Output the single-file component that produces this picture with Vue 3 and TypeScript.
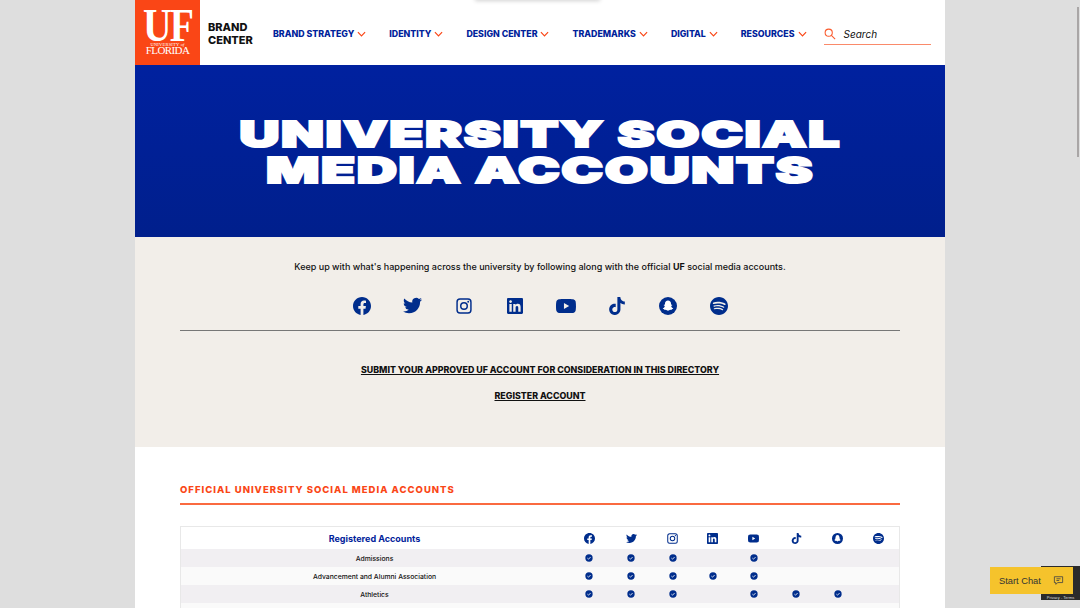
<template>
  <div class="page">
    <div class="top-shadow"></div>
    <header class="header">
      <a class="logo">
        <span class="logo-uf">UF</span>
        <span class="logo-uni">UNIVERSITY <i>of</i></span>
        <span class="logo-fl">FLORIDA</span>
      </a>
      <div class="brand">BRAND<br />CENTER</div>
      <nav class="nav">
        <a v-for="item in navItems" :key="item" class="nav-item">
          {{ item }}
          <svg class="chev" viewBox="0 0 10 6"><path d="M1 1l4 4 4-4" /></svg>
        </a>
      </nav>
      <div class="search">
        <svg class="search-icon" viewBox="0 0 14 14"><circle cx="5.5" cy="5.5" r="4.2" /><path d="M8.6 8.6l4.4 4.4" /></svg>
        <span>Search</span>
      </div>
    </header>

    <section class="hero">
      <h1><span>UNIVERSITY SOCIAL</span><span>MEDIA ACCOUNTS</span></h1>
    </section>

    <section class="intro">
      <p class="lead">Keep up with what's happening across the university by following along with the official <b>UF</b> social media accounts.</p>
      <div class="socials">
        <div v-for="icon in icons" :key="icon.name" class="slot">
          <svg viewBox="0 0 24 24" :style="{ width: icon.size + 'px', height: icon.size + 'px' }">
            <path v-for="(p, i) in icon.paths" :key="i" :d="p.d" :fill="p.fill || '#002D8C'" fill-rule="evenodd" />
          </svg>
        </div>
      </div>
      <hr class="rule" />
      <a class="link">SUBMIT YOUR APPROVED UF ACCOUNT FOR CONSIDERATION IN THIS DIRECTORY</a>
      <a class="link second">REGISTER ACCOUNT</a>
    </section>

    <section class="directory">
      <h2>OFFICIAL UNIVERSITY SOCIAL MEDIA ACCOUNTS</h2>
      <div class="table">
        <div class="row head">
          <div class="name">Registered Accounts</div>
          <div v-for="icon in icons" :key="icon.name" class="cell">
            <svg class="mini" viewBox="0 0 24 24">
              <path v-for="(p, i) in icon.paths" :key="i" :d="p.d" :fill="p.fill || '#002D8C'" fill-rule="evenodd" />
            </svg>
          </div>
        </div>
        <div v-for="(row, r) in rows" :key="r" class="row body">
          <div class="name">{{ row.name }}</div>
          <div v-for="(on, i) in row.checks" :key="i" class="cell">
            <svg v-if="on" class="check" viewBox="0 0 12 12">
              <circle cx="6" cy="6" r="5.5" fill="#002D8C" />
              <path d="M3.6 6.2l1.7 1.6 3.1-3.3" fill="none" stroke="#fff" stroke-width="1.2" />
            </svg>
          </div>
        </div>
      </div>
    </section>

    <div class="recaptcha"><span>Privacy - Terms</span></div>
    <div class="chat">
      <span>Start Chat</span>
      <svg viewBox="0 0 16 16"><path d="M2 2.5h12v8.5H7l-3 2.5V11H2z" /><path d="M5 5.5h6M5 8h4" /></svg>
    </div>
    <div class="thumb"></div>
  </div>
</template>

<script setup lang="ts">
const navItems = ['BRAND STRATEGY', 'IDENTITY', 'DESIGN CENTER', 'TRADEMARKS', 'DIGITAL', 'RESOURCES']

interface IconPath { d: string; fill?: string }
const circle = 'M12 0a12 12 0 1 0 0 24a12 12 0 1 0 0-24z'

const icons: { name: string; size: number; paths: IconPath[] }[] = [
  { name: 'facebook', size: 18, paths: [{ d: 'M24 12.073c0-6.627-5.373-12-12-12s-12 5.373-12 12c0 5.99 4.388 10.954 10.125 11.854v-8.385H7.078v-3.47h3.047V9.43c0-3.007 1.792-4.669 4.533-4.669 1.312 0 2.686.235 2.686.235v2.953H15.83c-1.491 0-1.956.925-1.956 1.874v2.25h3.328l-.532 3.47h-2.796v8.385C19.612 23.027 24 18.062 24 12.073z' }] },
  { name: 'twitter', size: 19, paths: [{ d: 'M23.953 4.57a10 10 0 01-2.825.775 4.958 4.958 0 002.163-2.723c-.951.555-2.005.959-3.127 1.184a4.92 4.92 0 00-8.384 4.482C7.69 8.095 4.067 6.13 1.64 3.162a4.822 4.822 0 00-.666 2.475c0 1.71.87 3.213 2.188 4.096a4.904 4.904 0 01-2.228-.616v.06a4.923 4.923 0 003.946 4.827 4.996 4.996 0 01-2.212.085 4.936 4.936 0 004.604 3.417 9.867 9.867 0 01-6.102 2.105c-.39 0-.779-.023-1.17-.067a13.995 13.995 0 007.557 2.209c9.053 0 13.998-7.496 13.998-13.985 0-.21 0-.42-.015-.63A9.935 9.935 0 0024 4.59z' }] },
  { name: 'instagram', size: 16, paths: [{ d: 'M6 .5h12A5.5 5.5 0 0 1 23.500 6v12a5.500 5.500 0 0 1-5.500 5.500H6A5.500 5.500 0 0 1 .5 18V6A5.500 5.500 0 0 1 6 .5zM6 2.700A3.300 3.300 0 0 0 2.700 6v12A3.300 3.300 0 0 0 6 21.300h12a3.300 3.300 0 0 0 3.300-3.300V6A3.300 3.300 0 0 0 18 2.700zM12 6a6 6 0 1 1 0 12a6 6 0 1 1 0-12zm0 2.200a3.800 3.800 0 1 0 0 7.600a3.800 3.800 0 1 0 0-7.600zM18.300 4.300a1.400 1.400 0 1 1 0 2.800a1.400 1.400 0 1 1 0-2.800z' }] },
  { name: 'linkedin', size: 16, paths: [{ d: 'M20.447 20.452h-3.554v-5.569c0-1.328-.027-3.037-1.852-3.037-1.853 0-2.136 1.445-2.136 2.939v5.667H9.351V9h3.414v1.561h.046c.477-.9 1.637-1.85 3.37-1.85 3.601 0 4.267 2.37 4.267 5.455v6.286zM5.337 7.433c-1.144 0-2.063-.926-2.063-2.065 0-1.138.92-2.063 2.063-2.063 1.14 0 2.064.925 2.064 2.063 0 1.139-.925 2.065-2.064 2.065zm1.782 13.019H3.555V9h3.564v11.452zM22.225 0H1.771C.792 0 0 .774 0 1.729v20.542C0 23.227.792 24 1.771 24h20.451C23.2 24 24 23.227 24 22.271V1.729C24 .774 23.2 0 22.222 0h.003z' }] },
  { name: 'youtube', size: 20, paths: [{ d: 'M23.498 6.186a3.016 3.016 0 0 0-2.122-2.136C19.505 3.545 12 3.545 12 3.545s-7.505 0-9.377.505A3.017 3.017 0 0 0 .502 6.186C0 8.07 0 12 0 12s0 3.93.502 5.814a3.016 3.016 0 0 0 2.122 2.136c1.871.505 9.376.505 9.376.505s7.505 0 9.377-.505a3.015 3.015 0 0 0 2.122-2.136C24 15.93 24 12 24 12s0-3.93-.502-5.814zM9.545 15.568V8.432L15.818 12l-6.273 3.568z' }] },
  { name: 'tiktok', size: 18, paths: [{ d: 'M12.525.02c1.31-.02 2.61-.01 3.91-.02.08 1.53.63 3.09 1.75 4.170 1.12 1.110 2.700 1.620 4.240 1.790v4.030c-1.440-.05-2.890-.35-4.200-.97-.57-.26-1.100-.59-1.620-.93-.01 2.920.01 5.840-.02 8.750-.08 1.400-.54 2.790-1.350 3.940-1.310 1.920-3.580 3.170-5.910 3.210-1.430.08-2.860-.31-4.080-1.030-2.020-1.190-3.440-3.370-3.650-5.710-.02-.5-.03-1-.01-1.490.18-1.900 1.120-3.720 2.580-4.960 1.660-1.440 3.980-2.130 6.150-1.720.02 1.480-.04 2.960-.04 4.440-.99-.32-2.150-.23-3.020.37-.63.41-1.110 1.040-1.360 1.750-.21.51-.15 1.070-.14 1.610.24 1.640 1.820 3.020 3.500 2.870 1.120-.01 2.190-.66 2.770-1.610.19-.33.4-.67.41-1.060.1-1.790.06-3.570.07-5.360.01-4.030-.01-8.050.02-12.070z' }] },
  { name: 'snapchat', size: 18, paths: [
    { d: circle },
    { d: 'M12 4.600c2.500 0 4 1.800 4 4.100v1.700l1.300-.3.4 1-1.500.9c.4 1.500 1.300 2.500 2.700 3.100l-.2.700-1.700.4-.4 1-1.600-.1c-1 .4-1.800 1.200-3 1.200s-2-.8-3-1.200l-1.600.1-.4-1-1.700-.4-.2-.7c1.400-.6 2.300-1.600 2.700-3.100l-1.500-.9.4-1 1.300.3V8.700c0-2.300 1.500-4.100 4-4.100z', fill: '#fff' },
  ] },
  { name: 'spotify', size: 18, paths: [{ d: 'M12 0C5.400 0 0 5.400 0 12s5.400 12 12 12 12-5.400 12-12S18.660 0 12 0zm5.521 17.340c-.24.359-.66.48-1.021.24-2.820-1.740-6.360-2.101-10.561-1.141-.418.122-.779-.179-.899-.539-.12-.421.18-.78.54-.9 4.560-1.021 8.520-.6 11.640 1.320.42.18.479.659.301 1.020zm1.440-3.300c-.301.42-.841.6-1.262.3-3.239-1.980-8.159-2.580-11.939-1.380-.479.12-1.020-.12-1.140-.6-.12-.48.12-1.021.6-1.141C9.600 9.900 15 10.561 18.720 12.840c.361.181.54.78.241 1.200zm.12-3.360C15.240 8.400 8.820 8.160 5.160 9.301c-.6.179-1.200-.181-1.380-.721-.18-.601.18-1.200.72-1.381 4.260-1.260 11.280-1.020 15.721 1.621.539.3.719 1.020.419 1.560-.299.421-1.020.599-1.559.3z' }] },
]

const rows = [
  { name: 'Admissions', checks: [1, 1, 1, 0, 1, 0, 0, 0] },
  { name: 'Advancement and Alumni Association', checks: [1, 1, 1, 1, 1, 0, 0, 0] },
  { name: 'Athletics', checks: [1, 1, 1, 0, 1, 1, 1, 0] },
  { name: '', checks: [0, 0, 0, 0, 0, 0, 0, 0] },
]
</script>

<style>
html, body {
  margin: 0;
  height: 608px;
  overflow: hidden;
  background: #dedede;
}
</style>

<style scoped>
.page {
  width: 810px;
  margin: 0 auto;
  background: #fff;
  font-family: Inter, "Open Sans", sans-serif;
  color: #111;
}
.top-shadow {
  position: absolute;
  top: -6px;
  left: 475px;
  width: 125px;
  height: 6px;
  box-shadow: 0 1px 4px rgba(0, 0, 0, 0.18);
}
.header {
  display: flex;
  align-items: center;
  height: 65px;
  background: #fff;
}
.logo {
  width: 65px;
  height: 65px;
  flex: none;
  background: #fa4616;
  color: #fff;
  font-family: "Liberation Serif", serif;
  display: flex;
  flex-direction: column;
  align-items: center;
  padding-top: 9px;
  box-sizing: border-box;
}
.logo-uf {
  font-size: 46px;
  line-height: 33px;
  font-weight: 700;
  letter-spacing: -2px;
  transform: scaleX(0.86);
}
.logo-uni {
  font-size: 4.5px;
  line-height: 5px;
  letter-spacing: 0.2px;
}
.logo-fl {
  font-size: 11px;
  line-height: 9px;
  letter-spacing: -0.6px;
  margin-top: -1px;
}
.brand {
  margin-left: 8px;
  margin-top: 2px;
  width: 65px;
  flex: none;
  font-size: 11px;
  line-height: 12.5px;
  font-weight: 800;
  color: #111;
}
.nav {
  display: flex;
  gap: 23px;
  flex: none;
  margin-top: 2px;
}
.nav-item {
  display: flex;
  align-items: center;
  gap: 3px;
  font-size: 8.8px;
  font-weight: 800;
  color: #00229a;
  white-space: nowrap;
}
.chev {
  width: 9px;
  height: 6px;
  fill: none;
  stroke: #fa4616;
  stroke-width: 1.3;
}
.search {
  margin-left: 17px;
  width: 107px;
  height: 21px;
  flex: none;
  display: flex;
  align-items: center;
  gap: 8px;
  margin-top: 3px;
  border-bottom: 1px solid #fa8a6a;
  font-size: 10px;
  font-style: italic;
  color: #111;
}
.search-icon {
  width: 12px;
  height: 12px;
  fill: none;
  stroke: #fa5a2c;
  stroke-width: 1.2;
}
.hero {
  height: 172px;
  background: linear-gradient(#00219f, #001f8c);
  display: flex;
  align-items: center;
  justify-content: center;
}
.hero h1 {
  margin: 0;
  display: flex;
  flex-direction: column;
  align-items: center;
  color: #fff;
  font-size: 36px;
  line-height: 36px;
  font-weight: 900;
  -webkit-text-stroke: 2px #fff;
  letter-spacing: 1px;
  transform: translateY(1px) scaleX(1.55);
  white-space: nowrap;
}
.intro {
  height: 210px;
  box-sizing: border-box;
  padding: 23px 45px 0;
  background: #f2eee9;
  display: flex;
  flex-direction: column;
  align-items: center;
}
.lead {
  margin: 0;
  font-size: 9px;
  line-height: 13px;
  font-weight: 500;
  color: #111;
  white-space: nowrap;
}
.lead b { font-weight: 700; }
.socials {
  display: flex;
  gap: 31px;
  margin-top: 23px;
}
.slot {
  width: 20px;
  height: 19px;
  display: flex;
  align-items: center;
  justify-content: center;
}
.slot svg { display: block; }
.rule {
  align-self: stretch;
  margin: 15px 0 0;
  border: 0;
  border-top: 1px solid #777;
}
.link {
  margin-top: 33px;
  font-size: 8.85px;
  line-height: 12px;
  font-weight: 800;
  color: #111;
  text-decoration: underline;
}
.link.second { margin-top: 14px; }
.directory {
  padding: 36px 45px 0;
}
.directory h2 {
  margin: 0;
  padding-bottom: 7px;
  border-bottom: 2px solid #fa6a40;
  font-size: 9.5px;
  line-height: 13px;
  font-weight: 800;
  letter-spacing: 1px;
  color: #fa4616;
}
.table {
  margin-top: 21px;
  border: 1px solid #e8e8e8;
  border-bottom: 0;
}
.row {
  display: grid;
  grid-template-columns: 387px 42px 42px 41px 39px 43px 42px 41px 41px;
  align-items: center;
}
.row.head { height: 22px; background: #fff; }
.row.body { height: 18px; background: #f1eff2; }
.row.body:nth-child(odd) { background: #fafafa; }
.name {
  text-align: center;
  font-size: 6.8px;
  font-weight: 500;
  color: #111;
}
.head .name {
  font-size: 9px;
  font-weight: 700;
  color: #00229a;
}
.cell {
  display: flex;
  justify-content: center;
}
.mini {
  width: 11px;
  height: 11px;
  display: block;
}
.check {
  width: 8px;
  height: 8px;
  display: block;
}
.recaptcha {
  position: fixed;
  right: 0;
  top: 566px;
  width: 39px;
  height: 34px;
  background: #2b2b2b;
  color: #ddd;
  font-family: "Liberation Sans", sans-serif;
  font-size: 4px;
  display: flex;
  align-items: flex-end;
  justify-content: center;
  white-space: nowrap;
}
.chat {
  position: fixed;
  left: 990px;
  top: 567px;
  width: 83px;
  height: 27px;
  box-sizing: border-box;
  padding: 0 9px;
  background: #f5c32c;
  color: #333;
  font-family: "Liberation Sans", sans-serif;
  font-size: 9.3px;
  display: flex;
  align-items: center;
  justify-content: space-between;
}
.chat svg {
  width: 11px;
  height: 11px;
  fill: none;
  stroke: #444;
  stroke-width: 1.2;
}
.thumb {
  position: fixed;
  left: 1077px;
  top: 7px;
  width: 2px;
  height: 150px;
  background: #a9a6a6;
}
</style>
